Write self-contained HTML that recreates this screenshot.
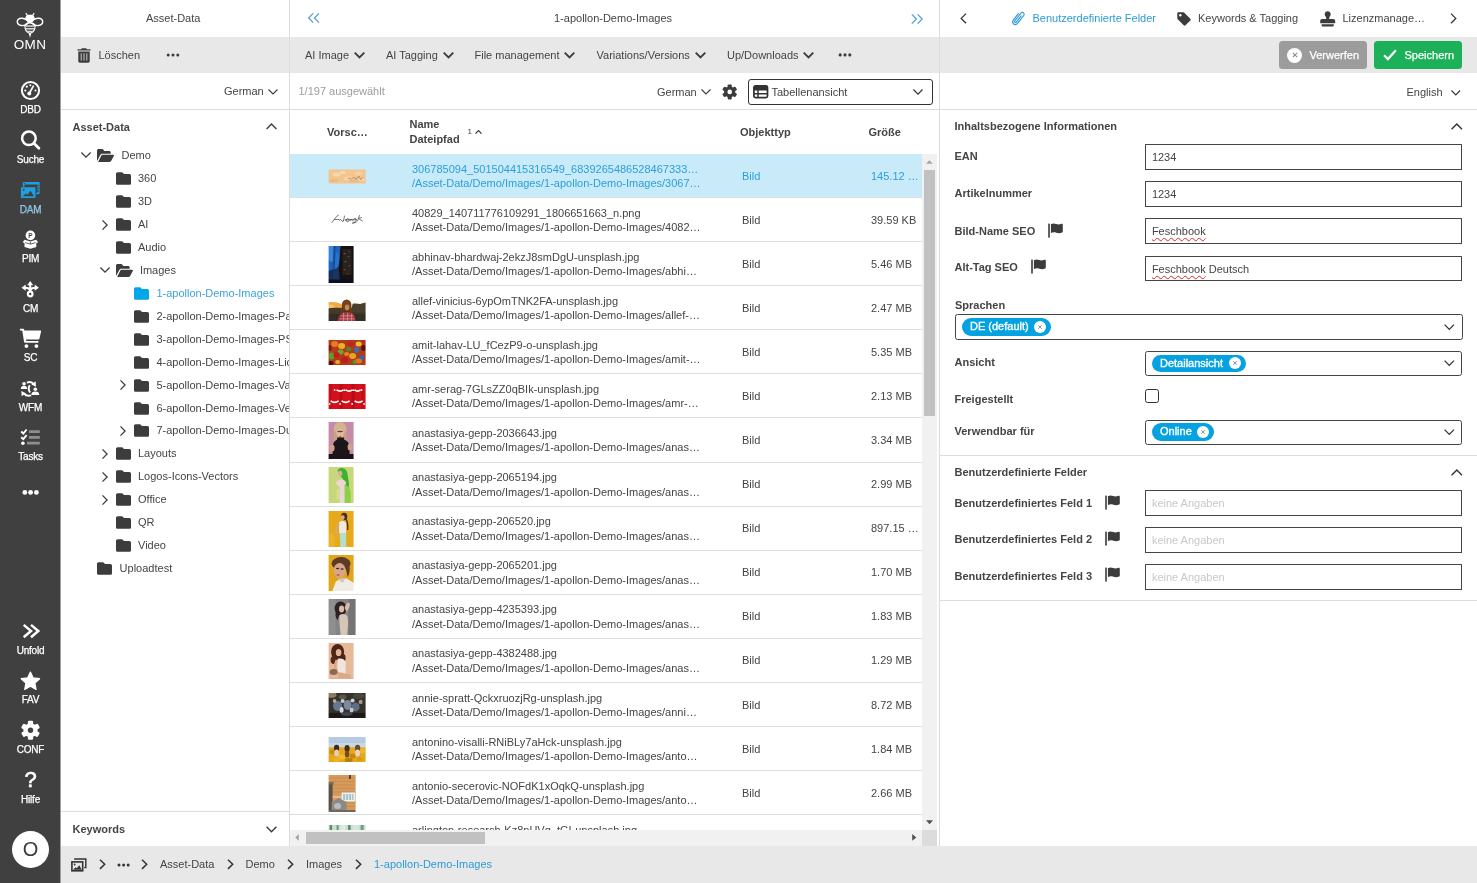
<!DOCTYPE html>
<html lang="de">
<head>
<meta charset="utf-8">
<title>OMN DAM</title>
<style>
*{box-sizing:border-box;margin:0;padding:0}
html,body{width:1477px;height:883px;overflow:hidden;background:#fff}
body{font-family:"Liberation Sans",Arial,sans-serif;font-size:11px;color:#444;position:relative}
#tree,#mid,#right,#side,#bc{will-change:transform;opacity:0.999}
.abs{position:absolute}
.t{position:absolute;white-space:nowrap;line-height:14px}
.b{font-weight:bold}
.blue{color:#2b9cd8}
.blue2{color:#3aa2dc}
svg{position:absolute;overflow:visible}
/* sidebar */
#side{position:absolute;left:0;top:0;width:61px;height:883px;background:linear-gradient(90deg,#404040 0,#404040 60px,#a0a0a0 60px,#a0a0a0 61px);color:#fff}
#side .lbl{position:absolute;left:0;width:61px;text-align:center;font-size:10px;line-height:13px;color:#fff;letter-spacing:-0.2px;-webkit-text-stroke:0.25px #fff}
/* panels */
.bar{position:absolute;background:#e8e8e8}
.hl{position:absolute;height:1px;background:#dcdcdc}
.vl{position:absolute;width:1px;background:#dcdcdc}
/* tree */
.tr{position:absolute;left:61px;width:229px;height:23px;overflow:hidden}
/* table */
.row{position:absolute;left:290px;width:632px;height:44.080px;border-bottom:1px solid #dedede;overflow:hidden}
.row.sel{background:#c9ebf9;color:#2b9fda}
.row .n1{position:absolute;left:122px;top:7.600px;white-space:nowrap;line-height:14px}
.row .n2{position:absolute;left:122px;top:22px;white-space:nowrap;line-height:14px}
.row .ty{position:absolute;left:452px;top:14.600px;line-height:14px}
.row .sz{position:absolute;left:581px;top:14.600px;line-height:14px;white-space:nowrap}
.row .th{position:absolute}
/* form */
.inp{position:absolute;left:1144.700px;width:317.800px;height:25.700px;border:1.300px solid #444;background:#fff;border-radius:0.500px}
.inp.sel{border-radius:2.500px}
.inp span{position:absolute;left:6.200px;top:5.100px;line-height:14px;white-space:nowrap}
.ph{color:#c8c8c8}
.btx{color:#fff;-webkit-text-stroke:0.25px #fff}
u{text-decoration:none}
.chip{position:absolute;height:17.400px;border-radius:9px;background:#05a2e1;color:#fff;line-height:17px;padding-left:8px;white-space:nowrap;-webkit-text-stroke:0.350px #fff}
.chip i{position:absolute;right:4.700px;top:2.700px;width:12px;height:12px;border-radius:6px;background:#fff}
.sq{text-decoration:underline wavy #e02424;text-decoration-thickness:1.200px;text-underline-offset:2px}
</style>
</head>
<body>

<!-- ============ SIDEBAR ============ -->
<div id="side">
  <!-- bee logo -->
  <svg style="left:16px;top:12px" width="28" height="25" viewBox="0 0 28 25">
    <g fill="none" stroke="#fff" stroke-width="1.450">
      <path d="M12.800 10.800C10.500 5.600 1.300 4.300 1.300 9.600c0 5 7.800 5.200 11.500 1.200z"/>
      <path d="M15.200 10.800C17.500 5.600 26.700 4.300 26.700 9.600c0 5-7.800 5.200-11.500 1.200z"/>
    </g>
    <path fill="#fff" d="M10.200 0.700l1.400 2h4.800l1.400-2 0.900 0.500-1.300 2.300c1.200 1 1.500 2.600 1 4.200-1.600 0.900-3 2-4.400 3.500-1.400-1.500-2.800-2.600-4.400-3.500-0.500-1.600-0.200-3.200 1-4.200L9.300 1.200z"/>
    <path d="M9 14.500c0-2.200 2-3.700 5-3.700s5 1.500 5 3.700c0 3.300-1.800 5.700-4.200 6.500l-0.800 2.600-0.800-2.600C10.800 20.200 9 17.800 9 14.500z" fill="none" stroke="#fff" stroke-width="1.200"/>
    <g fill="#d9d9d9">
      <rect x="10" y="13.300" width="8" height="1.500"/>
      <rect x="10" y="16" width="8" height="1.500"/>
      <path d="M10.700 18.700h6.600l-1.200 1.600h-4.200z"/>
    </g>
  </svg>
  <div class="lbl" style="top:37px;font-size:13.500px;line-height:16px;letter-spacing:0.300px;left:-0.500px;-webkit-text-stroke:0">OMN</div>

  <!-- DBD gauge -->
  <svg style="left:20px;top:80px" width="21" height="21" viewBox="0 0 21 21">
    <circle cx="10.500" cy="10.500" r="8.600" fill="none" stroke="#fff" stroke-width="2"/>
    <circle cx="9.300" cy="13.500" r="2" fill="#fff"/>
    <path d="M9.300 13.500L13.300 6.200" stroke="#fff" stroke-width="1.700" stroke-linecap="round"/>
    <circle cx="5.300" cy="10.500" r="1.100" fill="#fff"/><circle cx="6.800" cy="6.700" r="1.100" fill="#fff"/><circle cx="10.300" cy="5.200" r="1" fill="#fff"/><circle cx="15.500" cy="10.500" r="1.100" fill="#fff"/>
  </svg>
  <div class="lbl" style="top:103px">DBD</div>

  <!-- Suche -->
  <svg style="left:20px;top:129px" width="21" height="21" viewBox="0 0 21 21">
    <circle cx="8.900" cy="9.300" r="6.800" fill="none" stroke="#fff" stroke-width="2.500"/>
    <path d="M13.900 14.300l5 5" stroke="#fff" stroke-width="2.800" stroke-linecap="round"/>
  </svg>
  <div class="lbl" style="top:153px">Suche</div>

  <!-- DAM -->
  <svg style="left:20px;top:181px" width="21" height="18" viewBox="0 0 21 18">
    <path fill="#1e9fe0" d="M3.600 1h15.200a0.800 0.800 0 0 1 0.800 0.800v10.700a0.800 0.800 0 0 1-0.800 0.800h-2.800v-1.600h1.500v-8.200h-13.100v2.300h-1.600v-4a0.800 0.800 0 0 1 0.800-0.800z"/>
    <g fill="#3f3f3f"><rect x="17.800" y="3.800" width="1" height="1.400"/><rect x="17.800" y="6.600" width="1" height="1.400"/><rect x="17.800" y="9.400" width="1" height="1.400"/><rect x="3.800" y="2" width="1.500" height="0.800"/></g>
    <rect x="0.900" y="6.300" width="14.600" height="10.700" rx="0.800" fill="#1e9fe0"/>
    <path fill="#3f3f3f" d="M2.800 15.300l3-2.700 1.600 1.100 3.200-4 3.300 5.600z"/>
    <circle cx="3.800" cy="8.800" r="0.900" fill="#3f3f3f"/>
  </svg>
  <div class="lbl" style="top:202.500px;color:#2198d8">DAM</div>

  <!-- PIM -->
  <svg style="left:22px;top:230px" width="17" height="19" viewBox="0 0 17 19">
    <circle cx="8.400" cy="5.400" r="4.800" fill="#fff"/>
    <text x="8.400" y="7.900" font-size="6.500" font-weight="bold" text-anchor="middle" fill="#3f3f3f" font-family="Liberation Sans, sans-serif">P</text>
    <path fill="#fff" d="M2.600 9.800L8.400 11.600 14.200 9.800 16.200 12.300 14.300 13v4.100L8.400 18.700 2.500 17.100V13L0.600 12.300z"/>
    <path d="M3.200 12.600l5.200 1.500 5.200-1.500M8.400 11.800v2.300" stroke="#3f3f3f" stroke-width="0.800" fill="none"/>
  </svg>
  <div class="lbl" style="top:252px">PIM</div>

  <!-- CM -->
  <svg style="left:21px;top:280px" width="19" height="19" viewBox="0 0 19 19">
    <circle cx="9.200" cy="14" r="2.300" fill="none" stroke="#fff" stroke-width="2.200"/>
    <path d="M9.200 11.500C9.200 8.800 7.400 7.700 4 7.700M9.200 11.500C9.200 8.800 11 7.700 14.400 7.700M9.200 11.500V4.500" stroke="#fff" stroke-width="2.100" fill="none"/>
    <path fill="#fff" d="M9.200 0.900l3 4.300h-6zM0.500 7.700l4.200-3.100v6.200zM17.900 7.700l-4.200-3.100v6.200z"/>
  </svg>
  <div class="lbl" style="top:301.500px">CM</div>

  <!-- SC cart -->
  <svg style="left:19px;top:328px" width="23" height="21" viewBox="0 0 23 21">
    <path fill="#fff" d="M0.900 0.800h3.300c0.500 0 0.800 0.300 0.900 0.700l0.200 1.100h16c0.600 0 0.900 0.500 0.800 1l-1.700 7.200c-0.100 0.400-0.400 0.700-0.900 0.700H7l0.300 1.600h12.100v1.700H6c-0.500 0-0.800-0.300-0.900-0.700L3.200 2.500H0.900z"/>
    <circle cx="7.400" cy="18.100" r="1.900" fill="#fff"/><circle cx="17.400" cy="18.100" r="1.900" fill="#fff"/>
  </svg>
  <div class="lbl" style="top:351px">SC</div>

  <!-- WFM -->
  <svg style="left:20px;top:381px" width="21" height="16" viewBox="0 0 21 16">
    <g fill="#fff">
      <circle cx="4" cy="2.800" r="1.800"/><path d="M0.800 8c0-2.200 1.300-3.200 3.200-3.200s3.200 1 3.200 3.200z"/>
      <circle cx="15.300" cy="8.200" r="1.800"/><path d="M11.300 14c0-2.400 1.600-3.500 4-3.500s4 1.100 4 3.500z"/>
      <path d="M15.600 0.300l0.400 5.400-4.600-2.300z"/><path d="M1.700 15.300l-0.400-5.400 4.600 2.300z"/>
    </g>
    <path d="M6.800 1.600c2.800-1 5.600-0.400 7 1.600M9.700 4.200c-1 1.600-1.200 4.800 0.400 7.400M11.200 14.400c-2.800 0.800-5.600 0.200-7-1.800" stroke="#fff" stroke-width="1.900" fill="none"/>
  </svg>
  <div class="lbl" style="top:401px">WFM</div>

  <!-- Tasks -->
  <svg style="left:20px;top:428px" width="21" height="18" viewBox="0 0 21 18">
    <g stroke="#8e8e8e" stroke-width="2.800"><path d="M9 3.700h10.800M9 9.300h10.800M7 15.200h12.800"/></g>
    <g stroke="#fff" stroke-width="1.900" fill="none"><path d="M1.200 3.500l2.100 2 3.300-4M1.200 9.200l2.100 2 3.300-4"/></g>
    <circle cx="2.900" cy="15.300" r="1.800" fill="#fff"/>
  </svg>
  <div class="lbl" style="top:450px">Tasks</div>

  <svg style="left:20px;top:488px" width="21" height="9" viewBox="0 0 21 9"><g fill="#fff"><circle cx="4.800" cy="4.400" r="2.400"/><circle cx="10.600" cy="4.400" r="2.400"/><circle cx="16.400" cy="4.400" r="2.400"/></g></svg>

  <!-- Unfold -->
  <svg style="left:22px;top:623px" width="18" height="16" viewBox="0 0 18 16">
    <path d="M1.700 1.900l7.300 6.100-7.300 6.300M9 1.900l7.300 6.100-7.300 6.300" stroke="#fff" stroke-width="2.500" fill="none"/>
  </svg>
  <div class="lbl" style="top:644px">Unfold</div>

  <!-- FAV -->
  <svg style="left:20px;top:671px" width="21" height="20" viewBox="0 0 21 20">
    <path fill="#fff" stroke="#fff" stroke-width="1.200" stroke-linejoin="round" d="M10.400 1l2.800 5.900 6.400 0.800-4.700 4.400 1.200 6.300-5.700-3.100-5.700 3.100 1.200-6.300L1.200 7.700l6.400-0.800z"/>
  </svg>
  <div class="lbl" style="top:693px">FAV</div>

  <!-- CONF gear -->
  <svg style="left:20px;top:720px" width="21" height="21" viewBox="0 0 21 21">
    <g transform="translate(10.500 10.300)">
      <g fill="#fff">
        <rect x="-2.600" y="-9.500" width="5.200" height="19" rx="1.200"/>
        <rect x="-2.600" y="-9.500" width="5.200" height="19" rx="1.200" transform="rotate(60)"/>
        <rect x="-2.600" y="-9.500" width="5.200" height="19" rx="1.200" transform="rotate(120)"/>
        <circle r="7"/>
      </g>
      <circle r="2.700" fill="#3f3f3f"/>
    </g>
  </svg>
  <div class="lbl" style="top:743px">CONF</div>

  <!-- Hilfe -->
  <div class="lbl" style="top:768px;font-size:22px;line-height:24px;letter-spacing:0;-webkit-text-stroke:0.600px #fff">?</div>
  <div class="lbl" style="top:793px">Hilfe</div>

  <div class="abs" style="left:12px;top:831px;width:37px;height:37px;border-radius:50%;background:#fff;color:#3c3c3c;font-size:20px;line-height:37px;text-align:center">O</div>
</div>

<!-- ============ TREE PANEL ============ -->
<div id="tree">
  <div class="t" style="left:146px;top:11px">Asset-Data</div>
  <div class="bar" style="left:60.500px;top:37px;width:229.500px;height:36px"></div>
  <!-- trash -->
  <svg style="left:77px;top:48px" width="14" height="15" viewBox="0 0 14 15">
    <path fill="#3c3c3c" d="M4.800 0.300h4.400l0.600 1h3.300c0.300 0 0.500 0.200 0.500 0.500v0.700h-13.200v-0.700c0-0.300 0.200-0.500 0.500-0.500h3.300zM1.300 3.500h11.400v9.800c0 0.800-0.600 1.400-1.400 1.400h-8.600c-0.800 0-1.400-0.600-1.400-1.400z"/>
    <g fill="#a9a9a9"><rect x="3.600" y="5.300" width="1.300" height="7.300"/><rect x="6.350" y="5.300" width="1.300" height="7.300"/><rect x="9.100" y="5.300" width="1.300" height="7.300"/></g>
  </svg>
  <div class="t" style="left:98.500px;top:48px">Löschen</div>
  <svg style="left:166px;top:53px" width="14" height="4" viewBox="0 0 14 4"><g fill="#3c3c3c"><circle cx="2.200" cy="2" r="1.500"/><circle cx="7" cy="2" r="1.500"/><circle cx="11.800" cy="2" r="1.500"/></g></svg>
  <div class="t" style="left:224px;top:84px">German</div>
  <svg style="left:267.500px;top:89px" width="10" height="6" viewBox="0 0 10 6"><path d="M0.500 0.500l4.500 4.500 4.500-4.500" fill="none" stroke="#3c3c3c" stroke-width="1.100"/></svg>
  <div class="hl" style="left:61px;top:109px;width:229px"></div>
  <div class="vl" style="left:289px;top:0;height:846px"></div>
  <div class="t b" style="left:72.500px;top:119.500px">Asset-Data</div>
  <svg style="left:266px;top:123px" width="11" height="7" viewBox="0 0 11 7"><path d="M0.600 6l4.900-4.900 4.900 4.900" fill="none" stroke="#3c3c3c" stroke-width="1.400"/></svg>
<div id="treeclip" class="abs" style="left:0;top:110px;width:289px;height:700px;overflow:hidden"><div class="abs" style="left:0;top:-110px">
<svg style="left:97.3px;top:149.0px" width="17" height="13" viewBox="0 0 17 12.8"><path fill="#3c3c3c" d="M1.500 0h3.700c0.500 0 0.900 0.200 1.200 0.600l0.800 1.200h5c0.800 0 1.500 0.700 1.500 1.500v1.300h-8.300c-0.900 0-1.700 0.500-2.100 1.300l-3.300 6v-10.400c0-0.800 0.700-1.500 1.500-1.500zM5.400 5.700h10.600c0.700 0 1.100 0.700 0.800 1.300l-2.700 5c-0.300 0.500-0.800 0.800-1.400 0.800h-11.600l3-5.900c0.300-0.700 0.700-1.200 1.300-1.200z"/></svg>
<svg style="left:81.3px;top:152.4px" width="10" height="6" viewBox="0 0 10 6"><path d="M0.400 0.500l4.600 4.600 4.600-4.600" fill="none" stroke="#3c3c3c" stroke-width="1.300"/></svg>
<div class="t" style="left:121.5px;top:148.4px">Demo</div>
<svg style="left:115.7px;top:172.3px" width="15" height="13" viewBox="0 0 14.5 12.3"><path fill="#3c3c3c" d="M1.6 0h3.9c0.500 0 0.900 0.200 1.200 0.600l0.900 1.300h5.300c0.900 0 1.600 0.700 1.600 1.600v7.200c0 0.900-0.700 1.600-1.600 1.600h-11.300c-0.900 0-1.600-0.700-1.600-1.600v-9.100c0-0.900 0.700-1.600 1.600-1.600z"/></svg>
<div class="t" style="left:138.0px;top:171.3px">360</div>
<svg style="left:115.7px;top:195.2px" width="15" height="13" viewBox="0 0 14.5 12.3"><path fill="#3c3c3c" d="M1.6 0h3.9c0.500 0 0.900 0.200 1.200 0.600l0.900 1.300h5.300c0.900 0 1.600 0.700 1.600 1.600v7.200c0 0.900-0.700 1.600-1.600 1.600h-11.300c-0.900 0-1.600-0.700-1.600-1.600v-9.100c0-0.900 0.700-1.600 1.600-1.600z"/></svg>
<div class="t" style="left:138.0px;top:194.2px">3D</div>
<svg style="left:115.7px;top:218.2px" width="15" height="13" viewBox="0 0 14.5 12.3"><path fill="#3c3c3c" d="M1.6 0h3.9c0.500 0 0.900 0.200 1.200 0.600l0.900 1.300h5.300c0.900 0 1.600 0.700 1.600 1.600v7.200c0 0.900-0.700 1.600-1.600 1.600h-11.300c-0.900 0-1.600-0.700-1.600-1.600v-9.100c0-0.900 0.700-1.600 1.600-1.600z"/></svg>
<svg style="left:101.9px;top:219.7px" width="6" height="10" viewBox="0 0 6 10"><path d="M0.500 0.400l4.600 4.600-4.600 4.600" fill="none" stroke="#3c3c3c" stroke-width="1.300"/></svg>
<div class="t" style="left:138.0px;top:217.2px">AI</div>
<svg style="left:115.7px;top:241.1px" width="15" height="13" viewBox="0 0 14.5 12.3"><path fill="#3c3c3c" d="M1.6 0h3.9c0.500 0 0.900 0.200 1.200 0.600l0.900 1.300h5.300c0.900 0 1.600 0.700 1.600 1.600v7.200c0 0.900-0.700 1.600-1.600 1.600h-11.300c-0.900 0-1.600-0.700-1.600-1.600v-9.100c0-0.900 0.700-1.600 1.600-1.600z"/></svg>
<div class="t" style="left:138.0px;top:240.1px">Audio</div>
<svg style="left:115.7px;top:263.6px" width="17" height="13" viewBox="0 0 17 12.8"><path fill="#3c3c3c" d="M1.500 0h3.700c0.500 0 0.900 0.200 1.200 0.600l0.800 1.200h5c0.800 0 1.500 0.700 1.500 1.500v1.300h-8.300c-0.900 0-1.700 0.500-2.100 1.300l-3.300 6v-10.400c0-0.800 0.700-1.500 1.500-1.500zM5.400 5.700h10.600c0.700 0 1.100 0.700 0.800 1.300l-2.700 5c-0.300 0.500-0.800 0.800-1.400 0.800h-11.600l3-5.900c0.300-0.700 0.700-1.200 1.300-1.200z"/></svg>
<svg style="left:99.7px;top:267.0px" width="10" height="6" viewBox="0 0 10 6"><path d="M0.400 0.500l4.600 4.600 4.600-4.600" fill="none" stroke="#3c3c3c" stroke-width="1.300"/></svg>
<div class="t" style="left:139.9px;top:263.0px">Images</div>
<svg style="left:134.1px;top:286.9px" width="15" height="13" viewBox="0 0 14.5 12.3"><path fill="#00a7e6" d="M1.6 0h3.9c0.500 0 0.900 0.200 1.200 0.600l0.900 1.300h5.300c0.900 0 1.600 0.700 1.600 1.600v7.200c0 0.900-0.700 1.600-1.600 1.600h-11.300c-0.900 0-1.600-0.700-1.600-1.600v-9.100c0-0.900 0.700-1.600 1.600-1.600z"/></svg>
<div class="t blue2" style="left:156.4px;top:285.9px">1-apollon-Demo-Images</div>
<svg style="left:134.1px;top:309.8px" width="15" height="13" viewBox="0 0 14.5 12.3"><path fill="#3c3c3c" d="M1.6 0h3.9c0.500 0 0.900 0.200 1.200 0.600l0.900 1.300h5.300c0.900 0 1.600 0.700 1.600 1.600v7.200c0 0.900-0.700 1.600-1.600 1.600h-11.300c-0.900 0-1.600-0.700-1.600-1.600v-9.100c0-0.900 0.700-1.600 1.600-1.600z"/></svg>
<div class="t" style="left:156.4px;top:308.8px">2-apollon-Demo-Images-Packshots</div>
<svg style="left:134.1px;top:332.8px" width="15" height="13" viewBox="0 0 14.5 12.3"><path fill="#3c3c3c" d="M1.6 0h3.9c0.500 0 0.900 0.200 1.200 0.600l0.900 1.300h5.300c0.900 0 1.600 0.700 1.600 1.600v7.200c0 0.900-0.700 1.600-1.600 1.600h-11.300c-0.900 0-1.600-0.700-1.600-1.600v-9.100c0-0.900 0.700-1.600 1.600-1.600z"/></svg>
<div class="t" style="left:156.4px;top:331.8px">3-apollon-Demo-Images-PSD</div>
<svg style="left:134.1px;top:355.7px" width="15" height="13" viewBox="0 0 14.5 12.3"><path fill="#3c3c3c" d="M1.6 0h3.9c0.500 0 0.900 0.200 1.200 0.600l0.900 1.300h5.300c0.900 0 1.600 0.700 1.600 1.600v7.200c0 0.900-0.700 1.600-1.600 1.600h-11.300c-0.900 0-1.600-0.700-1.600-1.600v-9.100c0-0.900 0.700-1.600 1.600-1.600z"/></svg>
<div class="t" style="left:156.4px;top:354.7px">4-apollon-Demo-Images-Lichtbilder</div>
<svg style="left:134.1px;top:378.6px" width="15" height="13" viewBox="0 0 14.5 12.3"><path fill="#3c3c3c" d="M1.6 0h3.9c0.500 0 0.900 0.200 1.200 0.600l0.900 1.300h5.300c0.900 0 1.600 0.700 1.600 1.600v7.200c0 0.900-0.700 1.600-1.600 1.600h-11.300c-0.900 0-1.600-0.700-1.600-1.600v-9.100c0-0.900 0.700-1.600 1.600-1.600z"/></svg>
<svg style="left:120.3px;top:380.1px" width="6" height="10" viewBox="0 0 6 10"><path d="M0.500 0.400l4.600 4.600-4.600 4.600" fill="none" stroke="#3c3c3c" stroke-width="1.300"/></svg>
<div class="t" style="left:156.4px;top:377.6px">5-apollon-Demo-Images-Variationen</div>
<svg style="left:134.1px;top:401.5px" width="15" height="13" viewBox="0 0 14.5 12.3"><path fill="#3c3c3c" d="M1.6 0h3.9c0.500 0 0.900 0.200 1.200 0.600l0.900 1.300h5.300c0.900 0 1.600 0.700 1.600 1.600v7.200c0 0.900-0.700 1.600-1.600 1.600h-11.300c-0.900 0-1.600-0.700-1.600-1.600v-9.100c0-0.900 0.700-1.600 1.600-1.600z"/></svg>
<div class="t" style="left:156.4px;top:400.5px">6-apollon-Demo-Images-Vektoren</div>
<svg style="left:134.1px;top:424.4px" width="15" height="13" viewBox="0 0 14.5 12.3"><path fill="#3c3c3c" d="M1.6 0h3.9c0.500 0 0.900 0.200 1.200 0.600l0.900 1.300h5.300c0.900 0 1.600 0.700 1.600 1.600v7.200c0 0.900-0.700 1.600-1.600 1.600h-11.300c-0.900 0-1.600-0.700-1.600-1.600v-9.100c0-0.900 0.700-1.600 1.600-1.600z"/></svg>
<svg style="left:120.3px;top:425.9px" width="6" height="10" viewBox="0 0 6 10"><path d="M0.500 0.400l4.600 4.600-4.600 4.600" fill="none" stroke="#3c3c3c" stroke-width="1.300"/></svg>
<div class="t" style="left:156.4px;top:423.4px">7-apollon-Demo-Images-Duplikate</div>
<svg style="left:115.7px;top:447.4px" width="15" height="13" viewBox="0 0 14.5 12.3"><path fill="#3c3c3c" d="M1.6 0h3.9c0.500 0 0.900 0.200 1.200 0.600l0.900 1.300h5.300c0.900 0 1.600 0.700 1.600 1.600v7.200c0 0.900-0.700 1.600-1.600 1.600h-11.300c-0.900 0-1.600-0.700-1.600-1.600v-9.100c0-0.900 0.700-1.600 1.600-1.600z"/></svg>
<svg style="left:101.9px;top:448.9px" width="6" height="10" viewBox="0 0 6 10"><path d="M0.500 0.400l4.600 4.600-4.600 4.600" fill="none" stroke="#3c3c3c" stroke-width="1.300"/></svg>
<div class="t" style="left:138.0px;top:446.4px">Layouts</div>
<svg style="left:115.7px;top:470.3px" width="15" height="13" viewBox="0 0 14.5 12.3"><path fill="#3c3c3c" d="M1.6 0h3.9c0.500 0 0.900 0.200 1.200 0.600l0.900 1.300h5.300c0.900 0 1.600 0.700 1.600 1.600v7.200c0 0.900-0.700 1.600-1.600 1.600h-11.300c-0.900 0-1.600-0.700-1.600-1.600v-9.100c0-0.900 0.700-1.600 1.600-1.600z"/></svg>
<svg style="left:101.9px;top:471.8px" width="6" height="10" viewBox="0 0 6 10"><path d="M0.500 0.400l4.600 4.600-4.600 4.600" fill="none" stroke="#3c3c3c" stroke-width="1.300"/></svg>
<div class="t" style="left:138.0px;top:469.3px">Logos-Icons-Vectors</div>
<svg style="left:115.7px;top:493.2px" width="15" height="13" viewBox="0 0 14.5 12.3"><path fill="#3c3c3c" d="M1.6 0h3.9c0.500 0 0.900 0.200 1.200 0.600l0.900 1.300h5.300c0.900 0 1.600 0.700 1.600 1.600v7.200c0 0.900-0.700 1.600-1.600 1.600h-11.300c-0.900 0-1.600-0.700-1.600-1.600v-9.100c0-0.900 0.700-1.600 1.600-1.600z"/></svg>
<svg style="left:101.9px;top:494.7px" width="6" height="10" viewBox="0 0 6 10"><path d="M0.500 0.400l4.600 4.600-4.600 4.600" fill="none" stroke="#3c3c3c" stroke-width="1.300"/></svg>
<div class="t" style="left:138.0px;top:492.2px">Office</div>
<svg style="left:115.7px;top:516.1px" width="15" height="13" viewBox="0 0 14.5 12.3"><path fill="#3c3c3c" d="M1.6 0h3.9c0.500 0 0.900 0.200 1.200 0.600l0.900 1.300h5.300c0.900 0 1.600 0.700 1.600 1.600v7.200c0 0.900-0.700 1.600-1.600 1.600h-11.300c-0.900 0-1.600-0.700-1.600-1.600v-9.100c0-0.900 0.700-1.600 1.600-1.600z"/></svg>
<div class="t" style="left:138.0px;top:515.1px">QR</div>
<svg style="left:115.7px;top:539.0px" width="15" height="13" viewBox="0 0 14.5 12.3"><path fill="#3c3c3c" d="M1.6 0h3.9c0.500 0 0.900 0.200 1.200 0.600l0.900 1.300h5.300c0.900 0 1.600 0.700 1.600 1.600v7.200c0 0.900-0.700 1.600-1.600 1.600h-11.300c-0.900 0-1.600-0.700-1.600-1.600v-9.100c0-0.900 0.700-1.600 1.600-1.600z"/></svg>
<div class="t" style="left:138.0px;top:538.0px">Video</div>
<svg style="left:97.3px;top:562.0px" width="15" height="13" viewBox="0 0 14.5 12.3"><path fill="#3c3c3c" d="M1.6 0h3.9c0.500 0 0.900 0.200 1.200 0.600l0.900 1.300h5.300c0.900 0 1.600 0.700 1.600 1.600v7.200c0 0.900-0.700 1.600-1.600 1.600h-11.300c-0.900 0-1.600-0.700-1.600-1.600v-9.100c0-0.900 0.700-1.600 1.600-1.600z"/></svg>
<div class="t" style="left:119.6px;top:561.0px">Uploadtest</div>
</div></div>
  <div class="hl" style="left:61px;top:811px;width:229px"></div>
  <div class="t b" style="left:72.500px;top:821.500px">Keywords</div>
  <svg style="left:266px;top:826px" width="11" height="7" viewBox="0 0 11 7"><path d="M0.600 0.800l4.900 4.900 4.900-4.900" fill="none" stroke="#3c3c3c" stroke-width="1.400"/></svg>
</div>

<!-- ============ MIDDLE PANEL ============ -->
<div id="mid">
  <svg style="left:307.500px;top:13px" width="12" height="10" viewBox="0 0 12 10"><path d="M5.200 0.400l-4.600 4.600 4.600 4.600M11 0.400l-4.600 4.600 4.600 4.600" fill="none" stroke="#4a9fd6" stroke-width="1.200"/></svg>
  <div class="t" style="left:554px;top:11px">1-apollon-Demo-Images</div>
  <svg style="left:911px;top:13.500px" width="12" height="10" viewBox="0 0 12 10"><path d="M0.800 0.400l4.600 4.600-4.600 4.600M6.600 0.400l4.600 4.600-4.600 4.600" fill="none" stroke="#4a9fd6" stroke-width="1.200"/></svg>
  <div class="bar" style="left:290px;top:37px;width:650px;height:36px"></div>
  <div class="t" style="left:305px;top:48px">AI Image</div><svg style="left:354px;top:52px" width="11" height="7" viewBox="0 0 11 7"><path d="M0.700 0.700l4.800 4.800 4.800-4.800" fill="none" stroke="#3c3c3c" stroke-width="1.900"/></svg>
  <div class="t" style="left:386px;top:48px">AI Tagging</div><svg style="left:442.5px;top:52px" width="11" height="7" viewBox="0 0 11 7"><path d="M0.700 0.700l4.800 4.800 4.800-4.800" fill="none" stroke="#3c3c3c" stroke-width="1.900"/></svg>
  <div class="t" style="left:474.500px;top:48px">File management</div><svg style="left:564px;top:52px" width="11" height="7" viewBox="0 0 11 7"><path d="M0.700 0.700l4.800 4.800 4.800-4.800" fill="none" stroke="#3c3c3c" stroke-width="1.900"/></svg>
  <div class="t" style="left:596.500px;top:48px">Variations/Versions</div><svg style="left:694.5px;top:52px" width="11" height="7" viewBox="0 0 11 7"><path d="M0.700 0.700l4.800 4.800 4.800-4.800" fill="none" stroke="#3c3c3c" stroke-width="1.900"/></svg>
  <div class="t" style="left:727px;top:48px">Up/Downloads</div><svg style="left:803px;top:52px" width="11" height="7" viewBox="0 0 11 7"><path d="M0.700 0.700l4.800 4.800 4.800-4.800" fill="none" stroke="#3c3c3c" stroke-width="1.900"/></svg>
  <svg style="left:838px;top:53px" width="14" height="4" viewBox="0 0 14 4"><g fill="#3c3c3c"><circle cx="2.200" cy="1.900" r="1.550"/><circle cx="7" cy="1.900" r="1.550"/><circle cx="11.800" cy="1.900" r="1.550"/></g></svg>
  <div class="t" style="left:298.500px;top:84px;color:#9c9c9c">1/197 ausgewählt</div>
  <div class="t" style="left:657px;top:84.500px">German</div>
  <svg style="left:700.500px;top:89px" width="10" height="6" viewBox="0 0 10 6"><path d="M0.500 0.500l4.500 4.500 4.500-4.500" fill="none" stroke="#3c3c3c" stroke-width="1.100"/></svg>
  <!-- gear -->
  <svg style="left:722px;top:84px" width="16" height="16" viewBox="0 0 16 16">
    <g transform="translate(7.700 7.900)">
      <g fill="#3c3c3c">
        <rect x="-2" y="-7.500" width="4" height="15" rx="0.900"/>
        <rect x="-2" y="-7.500" width="4" height="15" rx="0.900" transform="rotate(60)"/>
        <rect x="-2" y="-7.500" width="4" height="15" rx="0.900" transform="rotate(120)"/>
        <circle r="5.600"/>
      </g>
      <circle r="2.300" fill="#fff"/>
    </g>
  </svg>
  <div class="abs" style="left:748px;top:79px;width:184.500px;height:26px;border:1.300px solid #333;border-radius:3px"></div>
  <!-- table icon -->
  <svg style="left:752.500px;top:85px" width="16" height="14" viewBox="0 0 16 14">
    <rect x="0.900" y="0.900" width="13.600" height="11.800" rx="1.600" fill="none" stroke="#333" stroke-width="1.700"/>
    <path d="M1 4.700h13.500M1 8.700h13.500M5 4.700v8" stroke="#333" stroke-width="1.500" fill="none"/>
    <rect x="1" y="1" width="13.400" height="3.600" fill="#333"/>
  </svg>
  <div class="t" style="left:771.500px;top:84.500px">Tabellenansicht</div>
  <svg style="left:913px;top:89px" width="10" height="6" viewBox="0 0 10 6"><path d="M0.500 0.500l4.500 4.600 4.500-4.600" fill="none" stroke="#333" stroke-width="1.200"/></svg>
  <div class="hl" style="left:290px;top:109px;width:650px"></div>
  <div class="t b" style="left:327px;top:125px">Vorsc…</div>
  <div class="t b" style="left:409.500px;top:117px">Name</div>
  <div class="t b" style="left:409.500px;top:132px">Dateipfad</div>
  <div class="t" style="left:467.500px;top:125px;font-size:8px">1</div>
  <svg style="left:474.500px;top:129.500px" width="7" height="4" viewBox="0 0 7 4"><path d="M0.500 3.600l3-3 3 3" fill="none" stroke="#333" stroke-width="1.200"/></svg>
  <div class="t b" style="left:740px;top:125px">Objekttyp</div>
  <div class="t b" style="left:868.500px;top:125px">Größe</div>
  <div id="rows" class="abs" style="left:0;top:154px;width:939px;height:676px;overflow:hidden"><div class="abs" style="left:0;top:-154px">
<div class="row sel" style="top:154.00px"><span class="th" style="left:0;top:0;transform:translate(38.6px,15.39px);width:37px;height:13.8px;overflow:hidden"><svg style="left:-2px;top:-2px;filter:blur(0.450px)" width="41" height="17.8" viewBox="-2 -2 41 17.8"><rect x="-2" y="-2" width="41" height="17.8" fill="#f2c48e"/><ellipse cx="8" cy="5" rx="4" ry="2" fill="#f8d6aa"/><ellipse cx="20" cy="9" rx="5" ry="2" fill="#f7d2a4"/><ellipse cx="14" cy="3" rx="3" ry="1.5" fill="#f9dab2"/><ellipse cx="30" cy="4" rx="4" ry="2" fill="#f6d0a2"/><ellipse cx="5" cy="11" rx="4" ry="1.5" fill="#ebb87e"/><ellipse cx="25" cy="11.5" rx="5" ry="1.5" fill="#ecba82"/><ellipse cx="33" cy="10" rx="3" ry="1.5" fill="#f8d6aa"/><path d="M19.500 9.600q1.200-1.800 2.200-0.400t2.400-0.500 2.400 0.300 2.400-0.900 2.400 0.600 2.400-0.700" fill="none" stroke="#8a6844" stroke-width="0.600"/></svg></span><span class="n1">306785094_501504415316549_6839265486528467333…</span><span class="n2">/Asset-Data/Demo/Images/1-apollon-Demo-Images/3067…</span><span class="ty">Bild</span><span class="sz">145.12 …</span></div>
<div class="row" style="top:198.08px"><svg style="left:40.500px;top:15px;filter:blur(0.350px)" width="33" height="12" viewBox="0 0 33 12"><path d="M1 9.500C3.500 6 5 3.500 7.500 2M3.500 6.500H8M8.500 7.500q1-2.500 2 0t2-0.300M13.500 3l-1 5M15 7.500c0.500-2.500 3-2.500 3-0.300s-2.500 2.300-3 0.300M19 7.500q1-2.500 2.200-0.300M22 7c0.800-2.300 3.200-2.300 3.200-0.200s-2 3.700-3.600 3.700M26.500 8l2-5.500M27.500 5.500l3-1M28 5.800l3.500 2.200" fill="none" stroke="#4a4a4a" stroke-width="0.750" stroke-linecap="round"/><path d="M14 6.800H26M21.500 9.300h4" fill="none" stroke="#3c3c3c" stroke-width="1.100" opacity="0.750"/></svg><span class="n1">40829_140711776109291_1806651663_n.png</span><span class="n2">/Asset-Data/Demo/Images/1-apollon-Demo-Images/4082…</span><span class="ty">Bild</span><span class="sz">39.59 KB</span></div>
<div class="row" style="top:242.16px"><span class="th" style="left:0;top:0;transform:translate(38.6px,3.99px);width:24.8px;height:36.6px;overflow:hidden"><svg style="left:-2px;top:-2px;filter:blur(0.450px)" width="28.8" height="40.6" viewBox="-2 -2 28.8 40.6"><rect x="-2" y="-2" width="28.8" height="40.6" fill="#121318"/><path d="M-2-2H12.500L11 16 9 24 4 28-2 31Z" fill="#1f63b8"/><ellipse cx="3" cy="7" rx="4.5" ry="9" fill="#3a86dc"/><ellipse cx="8" cy="14" rx="2.5" ry="8" fill="#2a72c8"/><path d="M5-2H7.500L6 22H4Z" fill="#184c94"/><path d="M-2 26L5 23 9 24 10 38H-2Z" fill="#142e5c"/><path d="M12-2H27V38H9.500Z" fill="#161214"/><rect x="14" y="3" width="9" height="26" fill="#2a201c"/><rect x="15" y="7" width="1.8" height="1.3" fill="#6a5848"/><rect x="19" y="10" width="1.8" height="1.3" fill="#5c4c40"/><rect x="16" y="15" width="1.8" height="1.3" fill="#6c5a4a"/><rect x="20" y="19" width="1.8" height="1.3" fill="#54463c"/><rect x="15" y="23" width="1.8" height="1.3" fill="#5e4e42"/><rect x="20" y="5" width="1.4" height="1.3" fill="#50443c"/><rect x="18" y="27" width="1.8" height="1.3" fill="#4c4038"/><path d="M5 24L10 21 11.500 38H4Z" fill="#1c3460"/><rect x="-2" y="33.5" width="29" height="5" fill="#0c1020"/></svg></span><span class="n1">abhinav-bhardwaj-2ekzJ8smDgU-unsplash.jpg</span><span class="n2">/Asset-Data/Demo/Images/1-apollon-Demo-Images/abhi…</span><span class="ty">Bild</span><span class="sz">5.46 MB</span></div>
<div class="row" style="top:286.24px"><span class="th" style="left:0;top:0;transform:translate(38.6px,9.89px);width:37px;height:24.8px;overflow:hidden"><svg style="left:-2px;top:-2px;filter:blur(0.450px)" width="41" height="28.8" viewBox="-2 -2 41 28.8"><rect x="-2" y="-2" width="41" height="28.8" fill="#ffffff"/><rect x="-2" y="7" width="41" height="20" fill="#fbeedc"/><ellipse cx="3" cy="11" rx="11" ry="5" fill="#f0a848"/><ellipse cx="1" cy="12" rx="6" ry="3.5" fill="#f8c468"/><path d="M-2 13C6 11 12 12 16 13H39V27H-2Z" fill="#463a26"/><path d="M24 8C28 7 31 9 33 7.500L39 6V16H22Z" fill="#4a4030"/><rect x="-2" y="18" width="41" height="9" fill="#332e26"/><ellipse cx="18" cy="9" rx="4.8" ry="5.5" fill="#74421c"/><ellipse cx="18.5" cy="11.5" rx="2.2" ry="2.8" fill="#c48a5c"/><path d="M13.500 10C12 14 12.500 17 14 19L16 13ZM22.500 10C24 14 23.500 17 22 19L20.500 13Z" fill="#6a3a18"/><path d="M9 27C9 19 13 16 18.500 16S27 19 27 27Z" fill="#a8343e"/><path d="M12 20h13M11 23h15M15 17v10M19 17v10M23 18v9" fill="none" stroke="#e0a0a0" stroke-width="0.700"/></svg></span><span class="n1">allef-vinicius-6ypOmTNK2FA-unsplash.jpg</span><span class="n2">/Asset-Data/Demo/Images/1-apollon-Demo-Images/allef-…</span><span class="ty">Bild</span><span class="sz">2.47 MB</span></div>
<div class="row" style="top:330.32px"><span class="th" style="left:0;top:0;transform:translate(38.6px,9.89px);width:37px;height:24.8px;overflow:hidden"><svg style="left:-2px;top:-2px;filter:blur(0.450px)" width="41" height="28.8" viewBox="-2 -2 41 28.8"><rect x="-2" y="-2" width="41" height="28.8" fill="#b23a1c"/><ellipse cx="13" cy="6" rx="3.5" ry="3" fill="#e8b322"/><ellipse cx="24" cy="16" rx="3.5" ry="3" fill="#e4a81e"/><ellipse cx="30" cy="4" rx="3" ry="2.5" fill="#ecc02c"/><ellipse cx="3" cy="16" rx="3" ry="3.5" fill="#5c9c2c"/><ellipse cx="12" cy="12" rx="3" ry="2.5" fill="#6aa82e"/><ellipse cx="20" cy="9" rx="2.5" ry="2.5" fill="#4c8c28"/><ellipse cx="8" cy="15" rx="3" ry="3" fill="#c61c1c"/><ellipse cx="22" cy="4" rx="3.5" ry="2.5" fill="#c82020"/><ellipse cx="16" cy="20" rx="3.5" ry="3" fill="#c01a1a"/><ellipse cx="28" cy="10" rx="2.5" ry="3" fill="#3272ba"/><ellipse cx="33" cy="18" rx="2.5" ry="2.5" fill="#2c68ae"/><ellipse cx="6" cy="4" rx="3.5" ry="3" fill="#e87a22"/><ellipse cx="18" cy="14" rx="2.5" ry="2" fill="#ea8224"/><ellipse cx="30" cy="21" rx="3.5" ry="2.5" fill="#e67420"/><ellipse cx="35" cy="8" rx="2.5" ry="3" fill="#5a1210"/><ellipse cx="2" cy="23" rx="3" ry="2" fill="#4c1010"/><ellipse cx="9" cy="22" rx="2.5" ry="2" fill="#e4b020"/><ellipse cx="26" cy="22" rx="2" ry="2" fill="#58982a"/><ellipse cx="35" cy="1" rx="2" ry="2" fill="#d02020"/><ellipse cx="1" cy="8" rx="2" ry="3" fill="#7a1814"/></svg></span><span class="n1">amit-lahav-LU_fCezP9-o-unsplash.jpg</span><span class="n2">/Asset-Data/Demo/Images/1-apollon-Demo-Images/amit-…</span><span class="ty">Bild</span><span class="sz">5.35 MB</span></div>
<div class="row" style="top:374.40px"><span class="th" style="left:0;top:0;transform:translate(38.6px,9.89px);width:37px;height:24.8px;overflow:hidden"><svg style="left:-2px;top:-2px;filter:blur(0.450px)" width="41" height="28.8" viewBox="-2 -2 41 28.8"><rect x="-2" y="-2" width="41" height="28.8" fill="#d3101b"/><rect x="11" y="-2" width="3" height="29" fill="#b80c16"/><rect x="23" y="-2" width="3" height="29" fill="#b80c16"/><rect x="33" y="-2" width="2" height="29" fill="#c00e18"/><rect x="1" y="-2" width="2" height="29" fill="#c00e18"/><path d="M8 6q3.500 2.600 7 0M17 6q3.500 2.600 7 0M26 6q3 2.400 6 0M2 17q4 3 8 0M13 17q4 3 8 0M26 17q4 3 8 0" fill="none" stroke="#fff" stroke-width="1.700"/><ellipse cx="6" cy="6" rx="0.9" ry="0.9" fill="#fff"/><ellipse cx="16" cy="6.3" rx="0.9" ry="0.9" fill="#fff"/><ellipse cx="25" cy="6.3" rx="0.9" ry="0.9" fill="#fff"/><ellipse cx="33" cy="6" rx="0.9" ry="0.9" fill="#fff"/><ellipse cx="1" cy="20" rx="0.9" ry="0.9" fill="#fff"/><ellipse cx="11.5" cy="20" rx="0.9" ry="0.9" fill="#fff"/><ellipse cx="23.5" cy="20" rx="0.9" ry="0.9" fill="#fff"/><ellipse cx="35.5" cy="20" rx="0.9" ry="0.9" fill="#fff"/></svg></span><span class="n1">amr-serag-7GLsZZ0qBIk-unsplash.jpg</span><span class="n2">/Asset-Data/Demo/Images/1-apollon-Demo-Images/amr-…</span><span class="ty">Bild</span><span class="sz">2.13 MB</span></div>
<div class="row" style="top:418.48px"><span class="th" style="left:0;top:0;transform:translate(38.6px,3.99px);width:24.8px;height:36.6px;overflow:hidden"><svg style="left:-2px;top:-2px;filter:blur(0.450px)" width="28.8" height="40.6" viewBox="-2 -2 28.8 40.6"><rect x="-2" y="-2" width="28.8" height="40.6" fill="#c58ba8"/><ellipse cx="11.5" cy="8" rx="6.5" ry="8" fill="#d4b48e"/><ellipse cx="11.5" cy="11.5" rx="3.6" ry="4.8" fill="#e2b8a2"/><ellipse cx="11.5" cy="9.5" rx="3" ry="0.8" fill="#5a4038"/><ellipse cx="11.5" cy="15" rx="1.3" ry="0.7" fill="#b02830"/><path d="M6 8C4 14 5 20 7 24L9 14ZM17 8C19 14 18 20 16 24L14.500 14Z" fill="#c8a47c"/><path d="M4 38V26C4 19 8 17 12 17S21 19 21 26V38Z" fill="#1a161a"/><rect x="8.5" y="15.5" width="7" height="4" fill="#1c181c"/><ellipse cx="3.5" cy="26" rx="2.5" ry="3.5" fill="#d0a08c"/><ellipse cx="21.5" cy="25" rx="2.5" ry="3.5" fill="#d0a08c"/><rect x="-2" y="32" width="29" height="6" fill="#1c1418"/></svg></span><span class="n1">anastasiya-gepp-2036643.jpg</span><span class="n2">/Asset-Data/Demo/Images/1-apollon-Demo-Images/anas…</span><span class="ty">Bild</span><span class="sz">3.34 MB</span></div>
<div class="row" style="top:462.56px"><span class="th" style="left:0;top:0;transform:translate(38.6px,3.99px);width:24.8px;height:36.6px;overflow:hidden"><svg style="left:-2px;top:-2px;filter:blur(0.450px)" width="28.8" height="40.6" viewBox="-2 -2 28.8 40.6"><rect x="-2" y="-2" width="28.8" height="40.6" fill="#c7d77b"/><path d="M9 3C12-1 19 1 19 8 20 14 21 18 20 22L16 20C16 14 14 10 10 8Z" fill="#3cb42a"/><ellipse cx="11.5" cy="6.5" rx="2.2" ry="2.8" fill="#d8b0a0"/><ellipse cx="12.5" cy="16" rx="5" ry="3.5" fill="#efd4d8"/><rect x="11" y="19" width="5.5" height="19" fill="#e9d6da"/><path d="M16 18C20 18 22 22 22 28V38H16Z" fill="#8ed044"/><rect x="8" y="22" width="3" height="10" fill="#d6e08a"/></svg></span><span class="n1">anastasiya-gepp-2065194.jpg</span><span class="n2">/Asset-Data/Demo/Images/1-apollon-Demo-Images/anas…</span><span class="ty">Bild</span><span class="sz">2.99 MB</span></div>
<div class="row" style="top:506.64px"><span class="th" style="left:0;top:0;transform:translate(38.6px,3.99px);width:24.8px;height:36.6px;overflow:hidden"><svg style="left:-2px;top:-2px;filter:blur(0.450px)" width="28.8" height="40.6" viewBox="-2 -2 28.8 40.6"><rect x="-2" y="-2" width="28.8" height="40.6" fill="#e6aa1c"/><ellipse cx="15.5" cy="5.5" rx="3.2" ry="3.8" fill="#4c2c1c"/><ellipse cx="14" cy="6.5" rx="2" ry="2.6" fill="#d8a888"/><path d="M17 7C19 11 19.500 15 19 19" fill="none" stroke="#4c2c1c" stroke-width="1.400"/><path d="M10.500 11C13 9.500 16 10 17.500 12V22H10.500Z" fill="#eeeae2"/><path d="M11 22H17.500V38H12Z" fill="#b2e0d0"/><path d="M10.500 13C8 16 7 20 8 23" fill="none" stroke="#d8a888" stroke-width="1.800"/><ellipse cx="3" cy="30" rx="3" ry="8" fill="#eab42a"/></svg></span><span class="n1">anastasiya-gepp-206520.jpg</span><span class="n2">/Asset-Data/Demo/Images/1-apollon-Demo-Images/anas…</span><span class="ty">Bild</span><span class="sz">897.15 …</span></div>
<div class="row" style="top:550.72px"><span class="th" style="left:0;top:0;transform:translate(38.6px,3.99px);width:24.8px;height:36.6px;overflow:hidden"><svg style="left:-2px;top:-2px;filter:blur(0.450px)" width="28.8" height="40.6" viewBox="-2 -2 28.8 40.6"><rect x="-2" y="-2" width="28.8" height="40.6" fill="#e2a61a"/><ellipse cx="12.5" cy="8.5" rx="9.5" ry="6.5" fill="#5c3a26"/><path d="M20 9C22 13 21 19 19 22L17 12Z" fill="#5c3a26"/><ellipse cx="11" cy="15.5" rx="6" ry="7.5" fill="#d9a68a"/><ellipse cx="9" cy="13.5" rx="1.6" ry="0.7" fill="#3c2418"/><ellipse cx="13.5" cy="14" rx="1.6" ry="0.7" fill="#3c2418"/><ellipse cx="9.5" cy="20" rx="1.6" ry="0.8" fill="#c04040"/><path d="M3 38L7 27C10 24 16 23 19 24L27 29V38Z" fill="#efebe5"/><path d="M9 24L14 28 17 23Z" fill="#d4c8bc"/></svg></span><span class="n1">anastasiya-gepp-2065201.jpg</span><span class="n2">/Asset-Data/Demo/Images/1-apollon-Demo-Images/anas…</span><span class="ty">Bild</span><span class="sz">1.70 MB</span></div>
<div class="row" style="top:594.80px"><span class="th" style="left:0;top:0;transform:translate(38.6px,3.99px);width:27.3px;height:36.6px;overflow:hidden"><svg style="left:-2px;top:-2px;filter:blur(0.450px)" width="31.3" height="40.6" viewBox="-2 -2 31.3 40.6"><rect x="-2" y="-2" width="31.3" height="40.6" fill="#858587"/><rect x="-2" y="-2" width="9" height="41" fill="#8f8f91"/><rect x="20" y="-2" width="10" height="41" fill="#747476"/><ellipse cx="12" cy="9.5" rx="6" ry="7" fill="#2c2020"/><ellipse cx="13" cy="10" rx="2.6" ry="3.4" fill="#d9baa6"/><path d="M16 9C17 5 19 3 21 4 22 7 20 10 18 13Z" fill="#d8bca8"/><path d="M11 16C14 14 18 15 19 18 20 24 19 30 18.500 38H12C12 30 10 22 11 16Z" fill="#d6c6b6"/><path d="M8 11C6 15 7 19 9 21L11 15Z" fill="#2c2020"/></svg></span><span class="n1">anastasiya-gepp-4235393.jpg</span><span class="n2">/Asset-Data/Demo/Images/1-apollon-Demo-Images/anas…</span><span class="ty">Bild</span><span class="sz">1.83 MB</span></div>
<div class="row" style="top:638.88px"><span class="th" style="left:0;top:0;transform:translate(38.6px,3.99px);width:24.8px;height:36.6px;overflow:hidden"><svg style="left:-2px;top:-2px;filter:blur(0.450px)" width="28.8" height="40.6" viewBox="-2 -2 28.8 40.6"><rect x="-2" y="-2" width="28.8" height="40.6" fill="#e7b999"/><ellipse cx="9" cy="9" rx="6.5" ry="8" fill="#4c2418"/><ellipse cx="5" cy="17" rx="3" ry="4" fill="#54281a"/><ellipse cx="14.5" cy="15" rx="2.5" ry="4" fill="#4c2418"/><ellipse cx="10" cy="9.5" rx="2.8" ry="3.6" fill="#e2b292"/><path d="M9 16C12 15 16 16 17 19V30C15 33 11 33 9 30Z" fill="#f1e5e1"/><path d="M8 17C6 21 6 25 8 28" fill="none" stroke="#dca88c" stroke-width="2"/><path d="M9 29C13 30 18 30 22 32V36H10Z" fill="#dca88c"/><ellipse cx="5" cy="29" rx="4" ry="3" fill="#8a6a52"/><rect x="-2" y="35" width="29" height="3" fill="#e0ae90"/></svg></span><span class="n1">anastasiya-gepp-4382488.jpg</span><span class="n2">/Asset-Data/Demo/Images/1-apollon-Demo-Images/anas…</span><span class="ty">Bild</span><span class="sz">1.29 MB</span></div>
<div class="row" style="top:682.96px"><span class="th" style="left:0;top:0;transform:translate(38.6px,9.89px);width:37px;height:24.8px;overflow:hidden"><svg style="left:-2px;top:-2px;filter:blur(0.450px)" width="41" height="28.8" viewBox="-2 -2 41 28.8"><rect x="-2" y="-2" width="41" height="28.8" fill="#35312b"/><ellipse cx="3" cy="2" rx="5" ry="3" fill="#8c7c62"/><ellipse cx="14" cy="4" rx="4" ry="2.5" fill="#5c5648"/><ellipse cx="30" cy="3" rx="6" ry="3" fill="#4a463e"/><ellipse cx="9" cy="13" rx="4.5" ry="5" fill="#66788e"/><ellipse cx="19" cy="12" rx="4" ry="5" fill="#7a8aa0"/><ellipse cx="27" cy="14" rx="4" ry="4.5" fill="#5e6e84"/><ellipse cx="14" cy="8" rx="2" ry="2" fill="#c6cacf"/><ellipse cx="24" cy="7.5" rx="2" ry="2" fill="#d0d2d6"/><ellipse cx="6" cy="8" rx="1.8" ry="2" fill="#b8a898"/><ellipse cx="32" cy="9" rx="2" ry="2.2" fill="#a89888"/><ellipse cx="13" cy="17" rx="2" ry="3" fill="#d4d8dc"/><ellipse cx="23" cy="17" rx="2" ry="2.5" fill="#c4c8cc"/><rect x="-2" y="20" width="41" height="7" fill="#1c1a18"/><ellipse cx="18" cy="21" rx="6" ry="2" fill="#3c4654"/></svg></span><span class="n1">annie-spratt-QckxruozjRg-unsplash.jpg</span><span class="n2">/Asset-Data/Demo/Images/1-apollon-Demo-Images/anni…</span><span class="ty">Bild</span><span class="sz">8.72 MB</span></div>
<div class="row" style="top:727.04px"><span class="th" style="left:0;top:0;transform:translate(38.6px,9.89px);width:37px;height:24.8px;overflow:hidden"><svg style="left:-2px;top:-2px;filter:blur(0.450px)" width="41" height="28.8" viewBox="-2 -2 41 28.8"><rect x="-2" y="-2" width="41" height="28.8" fill="#e3a81c"/><rect x="-2" y="-2" width="41" height="12" fill="#b6cbdf"/><rect x="-2" y="6" width="41" height="4.5" fill="#c9d7e2"/><ellipse cx="4" cy="15" rx="3" ry="2.5" fill="#c88a14"/><ellipse cx="13" cy="20" rx="3.5" ry="2.5" fill="#f0bc28"/><ellipse cx="24" cy="19" rx="3" ry="2.5" fill="#c48612"/><ellipse cx="34" cy="14" rx="3" ry="2.5" fill="#f0b824"/><ellipse cx="20" cy="23" rx="4" ry="2" fill="#b87c10"/><ellipse cx="8" cy="23" rx="3" ry="2" fill="#eeb422"/><ellipse cx="31" cy="22" rx="3" ry="2" fill="#d89a18"/><ellipse cx="8" cy="11" rx="2.6" ry="3.2" fill="#3c2818"/><ellipse cx="8" cy="16" rx="2.4" ry="3.5" fill="#e9cab8"/><ellipse cx="18.5" cy="11.5" rx="2.6" ry="3.4" fill="#4a2c18"/><ellipse cx="18.5" cy="17" rx="2.2" ry="3.5" fill="#7a4a28"/><ellipse cx="29" cy="11" rx="2.6" ry="3.2" fill="#6a4a30"/><ellipse cx="29" cy="16" rx="2.4" ry="3.5" fill="#edd2c4"/></svg></span><span class="n1">antonino-visalli-RNiBLy7aHck-unsplash.jpg</span><span class="n2">/Asset-Data/Demo/Images/1-apollon-Demo-Images/anto…</span><span class="ty">Bild</span><span class="sz">1.84 MB</span></div>
<div class="row" style="top:771.12px"><span class="th" style="left:0;top:0;transform:translate(38.6px,3.99px);width:27.3px;height:36.6px;overflow:hidden"><svg style="left:-2px;top:-2px;filter:blur(0.450px)" width="31.3" height="40.6" viewBox="-2 -2 31.3 40.6"><rect x="-2" y="-2" width="31.3" height="40.6" fill="#d69a5c"/><path d="M-2 3h32M-2 6.500h32M-2 10h32M-2 13.500h32M-2 17h32M-2 28h32M-2 31.500h32" fill="none" stroke="#c58a4c" stroke-width="0.800"/><rect x="-2" y="7" width="6" height="28" fill="#5c5048"/><rect x="-2" y="7" width="7" height="2.5" fill="#7a6a58"/><rect x="20.5" y="0" width="1.6" height="4" fill="#3c3028"/><rect x="13" y="17.5" width="13.5" height="9" fill="#eef2f2"/><rect x="14.5" y="19" width="10.5" height="6" fill="#a8c4d0"/><path d="M17 19v6M20 19v6M23 19v6" fill="none" stroke="#e8f0f0" stroke-width="0.900"/><path d="M4 22H14V21.300" fill="none" stroke="#e8e4dc" stroke-width="0.900"/><path d="M3 27L10 23 18 27V36H3Z" fill="#8c8a84"/><ellipse cx="9" cy="31" rx="3.5" ry="3" fill="#b8bcc0"/><rect x="-2" y="35" width="32" height="3" fill="#6c6860"/></svg></span><span class="n1">antonio-secerovic-NOFdK1xOqkQ-unsplash.jpg</span><span class="n2">/Asset-Data/Demo/Images/1-apollon-Demo-Images/anto…</span><span class="ty">Bild</span><span class="sz">2.66 MB</span></div>
<div class="row" style="top:815.20px"><span class="th" style="left:0;top:0;transform:translate(38.6px,9.89px);width:37px;height:24.8px;overflow:hidden"><svg style="left:-2px;top:-2px;filter:blur(0.450px)" width="41" height="28.8" viewBox="-2 -2 41 28.8"><rect x="-2" y="-2" width="41" height="28.8" fill="#c7e1cd"/><rect x="1" y="-2" width="2.5" height="29" fill="#5c8c70"/><rect x="8" y="-2" width="2" height="29" fill="#6c9c80"/><rect x="19.5" y="-2" width="2.5" height="29" fill="#5c8c70"/><rect x="32" y="-2" width="3" height="29" fill="#6c9c80"/><rect x="12" y="-2" width="5" height="29" fill="#dcece0"/><rect x="24" y="-2" width="6" height="29" fill="#d4e8d8"/></svg></span><span class="n1">arlington-research-Kz8nHVg_tGI-unsplash.jpg</span><span class="n2">/Asset-Data/Demo/Images/1-apollon-Demo-Images/arli…</span><span class="ty">Bild</span><span class="sz">3.10 MB</span></div>
  </div></div>
  <!-- vertical scrollbar -->
  <div class="abs" style="left:922px;top:153.500px;width:15px;height:676.500px;background:#f1f1f1"></div>
  <div class="abs" style="left:924px;top:170px;width:11px;height:246px;background:#c1c1c1"></div>
  <svg style="left:926px;top:160px" width="7" height="4" viewBox="0 0 7 4"><path d="M0 3.800l3.400-3.600 3.400 3.600z" fill="#a3a3a3"/></svg>
  <svg style="left:926px;top:819.500px" width="7" height="4.500" viewBox="0 0 7 4.500"><path d="M0 0.200l3.500 4.100 3.500-4.100z" fill="#505050"/></svg>
  <!-- horizontal scrollbar -->
  <div class="abs" style="left:290px;top:830px;width:632px;height:16px;background:#f1f1f1"></div><div class="abs" style="left:922px;top:830px;width:15px;height:16px;background:#dcdcdc"></div>
  <div class="abs" style="left:306px;top:832px;width:179px;height:11.500px;background:#c1c1c1"></div>
  <svg style="left:295px;top:834px" width="4" height="7" viewBox="0 0 4 7"><path d="M3.800 0l-3.600 3.400 3.600 3.400z" fill="#a3a3a3"/></svg>
  <svg style="left:912px;top:834.300px" width="4.500" height="7" viewBox="0 0 4.500 7"><path d="M0.200 0l4.100 3.400-4.100 3.400z" fill="#505050"/></svg>
</div>

<!-- ============ RIGHT PANEL ============ -->
<div id="right">
  <div class="vl" style="left:939px;top:0;height:846px"></div>
  <svg style="left:960px;top:13px" width="7" height="11" viewBox="0 0 7 11"><path d="M6 0.600l-4.800 4.800 4.800 4.800" fill="none" stroke="#333" stroke-width="1.300"/></svg>
  <!-- paperclip -->
  <svg style="left:1010px;top:10px" width="16" height="17" viewBox="0 0 16 17"><g transform="rotate(38 8 8.500)"><path d="M5.300 4.500v8.200a2.700 2.700 0 0 0 5.400 0V2.600a1.850 1.850 0 0 0-3.700 0v9.800a0.950 0.950 0 0 0 1.900 0V4.500" fill="none" stroke="#2b9cd8" stroke-width="1.150" stroke-linecap="round"/></g></svg>
  <div class="t blue" style="left:1032.500px;top:11px">Benutzerdefinierte Felder</div>
  <!-- tag -->
  <svg style="left:1177px;top:12px" width="14" height="14" viewBox="0 0 14 14"><path fill="#3c3c3c" d="M0.300 1.300c0-0.600 0.400-1 1-1h5c0.400 0 0.700 0.100 1 0.400l6 6c0.500 0.500 0.500 1.300 0 1.800l-4.800 4.800c-0.500 0.500-1.300 0.500-1.800 0l-6-6c-0.300-0.300-0.400-0.600-0.400-1z"/><circle cx="3.300" cy="3.300" r="1.200" fill="#fff"/></svg>
  <div class="t" style="left:1198px;top:11px">Keywords &amp; Tagging</div>
  <!-- stamp -->
  <svg style="left:1320px;top:10.500px" width="16" height="16" viewBox="0 0 16 16"><path fill="#3c3c3c" d="M7.700 0.300c1.700 0 3 1.300 3 2.900 0 0.900-0.400 1.600-0.900 2.300-0.500 0.700-0.600 1.300-0.600 2.100v0.500h4.100c1.100 0 1.900 0.800 1.900 1.900v2.300H0.200v-2.300c0-1.100 0.800-1.900 1.900-1.900h4.100v-0.500c0-0.800-0.100-1.400-0.600-2.100-0.500-0.700-0.900-1.400-0.900-2.300 0-1.600 1.300-2.900 3-2.900zM1.600 13.300h12.200v1.300c0 0.400-0.300 0.800-0.800 0.800H2.400c-0.500 0-0.800-0.400-0.800-0.800z"/></svg>
  <div class="t" style="left:1342.500px;top:11px">Lizenzmanage…</div>
  <svg style="left:1449.500px;top:13px" width="7" height="11" viewBox="0 0 7 11"><path d="M1 0.600l4.800 4.800-4.800 4.800" fill="none" stroke="#333" stroke-width="1.300"/></svg>

  <div class="bar" style="left:940px;top:37px;width:537px;height:36px"></div>
  <div class="abs" style="left:1278.700px;top:41.200px;width:88.300px;height:27.800px;border-radius:3.500px;background:#9c9c9c"></div>
  <div class="abs" style="left:1287px;top:47.500px;width:15px;height:15px;border-radius:50%;background:#fff"></div>
  <svg style="left:1291.500px;top:52px" width="6" height="6" viewBox="0 0 6 6"><path d="M0.800 0.800l4.400 4.400M5.200 0.800l-4.400 4.400" stroke="#8c8c8c" stroke-width="1.100"/></svg>
  <div class="t btx" style="left:1309.500px;top:47.500px">Verwerfen</div>
  <div class="abs" style="left:1374px;top:41.200px;width:88px;height:27.800px;border-radius:3.500px;background:#1cb158"></div>
  <svg style="left:1383px;top:49px" width="14" height="12" viewBox="0 0 14 12"><path d="M1 6.300l3.900 3.800 8-8.800" fill="none" stroke="#fff" stroke-width="2.200"/></svg>
  <div class="t btx" style="left:1404.500px;top:47.500px">Speichern</div>

  <div class="t" style="left:1406.500px;top:84.500px">English</div>
  <svg style="left:1450.500px;top:89.500px" width="10" height="6" viewBox="0 0 10 6"><path d="M0.500 0.500l4.300 4.400 4.300-4.400" fill="none" stroke="#333" stroke-width="1.100"/></svg>
  <div class="hl" style="left:940px;top:109px;width:537px"></div>

  <div class="t b" style="left:954.500px;top:118.8px">Inhaltsbezogene Informationen</div>
<svg style="left:1451px;top:122.5px" width="12" height="7" viewBox="0 0 12 7"><path d="M0.600 6.200l5.200-5.300 5.200 5.300" fill="none" stroke="#333" stroke-width="1.400"/></svg>
  <div class="t b" style="left:954.500px;top:149.3px">EAN</div>
<div class="inp" style="top:144.2px"><span class="">1234</span></div>
  <div class="t b" style="left:954.500px;top:186.3px">Artikelnummer</div>
<div class="inp" style="top:181.3px"><span class="">1234</span></div>
  <div class="t b" style="left:954.500px;top:223.6px">Bild-Name SEO</div>
<svg style="left:1047.5px;top:222.5px" width="16" height="15" viewBox="0 0 16 15"><rect x="0.200" y="0.600" width="1.600" height="14" fill="#3c3c3c"/><path fill="#3c3c3c" d="M2.900 1.200c1.800-0.900 3.400-0.900 5.200-0.200s3.400 0.700 5.200-0.200c0.700-0.300 1.500 0.100 1.500 0.900v6.700c0 0.500-0.300 0.900-0.700 1.100-2 0.900-3.800 0.900-5.800 0.200-1.800-0.700-3.400-0.600-5.400 0.300z"/></svg><div class="inp" style="top:218.4px"><span class=""><u class="sq">Feschbook</u></span></div>
  <div class="t b" style="left:954.500px;top:260.3px">Alt-Tag SEO</div>
<svg style="left:1030.5px;top:259.2px" width="16" height="15" viewBox="0 0 16 15"><rect x="0.200" y="0.600" width="1.600" height="14" fill="#3c3c3c"/><path fill="#3c3c3c" d="M2.900 1.200c1.800-0.900 3.400-0.900 5.200-0.200s3.400 0.700 5.200-0.200c0.700-0.300 1.500 0.100 1.500 0.900v6.700c0 0.500-0.300 0.900-0.700 1.100-2 0.900-3.800 0.900-5.800 0.200-1.800-0.700-3.400-0.600-5.400 0.300z"/></svg><div class="inp" style="top:255.5px"><span class=""><u class="sq">Feschbook</u> Deutsch</span></div>
  <div class="t b" style="left:955px;top:297.8px">Sprachen</div>
  <div class="inp sel" style="left:954.500px;width:508px;top:314.400px"></div>
<div class="chip" style="left:962px;top:318.200px;width:89px">DE (default)<i></i><svg style="right:7.700px;top:5.700px" width="6" height="6" viewBox="0 0 6 6"><path d="M1.200 1.200l3.600 3.600M4.800 1.200l-3.600 3.600" stroke="#7a8c98" stroke-width="0.900"/></svg></div><svg style="left:1443.500px;top:323.5px" width="11" height="7" viewBox="0 0 11 7"><path d="M0.600 0.600l4.700 4.800 4.700-4.800" fill="none" stroke="#333" stroke-width="1.300"/></svg>
  <div class="t b" style="left:954.500px;top:355.3px">Ansicht</div>
  <div class="inp sel" style="top:350.800px"></div>
<div class="chip" style="left:1152px;top:354.5px;width:93.5px">Detailansicht<i></i><svg style="right:7.700px;top:5.700px" width="6" height="6" viewBox="0 0 6 6"><path d="M1.200 1.200l3.600 3.600M4.800 1.200l-3.600 3.600" stroke="#7a8c98" stroke-width="0.900"/></svg></div><svg style="left:1443.500px;top:360px" width="11" height="7" viewBox="0 0 11 7"><path d="M0.600 0.600l4.700 4.800 4.700-4.800" fill="none" stroke="#333" stroke-width="1.300"/></svg>
  <div class="t b" style="left:954.500px;top:392.3px">Freigestellt</div>
  <div class="abs" style="left:1144.700px;top:389px;width:14px;height:14px;border:1.200px solid #333;border-radius:2.500px;background:#fff"></div>
  <div class="t b" style="left:954.500px;top:424.0px">Verwendbar für</div>
  <div class="inp sel" style="top:419.500px"></div>
<div class="chip" style="left:1152px;top:423.2px;width:61.8px">Online<i></i><svg style="right:7.700px;top:5.700px" width="6" height="6" viewBox="0 0 6 6"><path d="M1.200 1.200l3.600 3.600M4.800 1.200l-3.600 3.600" stroke="#7a8c98" stroke-width="0.900"/></svg></div><svg style="left:1443.500px;top:428.7px" width="11" height="7" viewBox="0 0 11 7"><path d="M0.600 0.600l4.700 4.800 4.700-4.800" fill="none" stroke="#333" stroke-width="1.300"/></svg>
  <div class="hl" style="left:940px;top:455px;width:537px"></div>

  <div class="t b" style="left:954.500px;top:465.1px">Benutzerdefinierte Felder</div>
<svg style="left:1451px;top:468.7px" width="12" height="7" viewBox="0 0 12 7"><path d="M0.600 6.200l5.200-5.300 5.200 5.300" fill="none" stroke="#333" stroke-width="1.400"/></svg>
  <div class="t b" style="left:954.500px;top:496.0px">Benutzerdefiniertes Feld 1</div>
<svg style="left:1104.5px;top:494.5px" width="16" height="15" viewBox="0 0 16 15"><rect x="0.200" y="0.600" width="1.600" height="14" fill="#3c3c3c"/><path fill="#3c3c3c" d="M2.900 1.200c1.800-0.900 3.400-0.900 5.200-0.200s3.400 0.700 5.200-0.200c0.700-0.300 1.500 0.100 1.500 0.900v6.700c0 0.500-0.300 0.900-0.700 1.100-2 0.900-3.800 0.900-5.800 0.200-1.800-0.700-3.400-0.600-5.400 0.300z"/></svg><div class="inp" style="top:490.2px"><span class="ph">keine Angaben</span></div>
  <div class="t b" style="left:954.500px;top:532.3px">Benutzerdefiniertes Feld 2</div>
<svg style="left:1104.5px;top:530.8px" width="16" height="15" viewBox="0 0 16 15"><rect x="0.200" y="0.600" width="1.600" height="14" fill="#3c3c3c"/><path fill="#3c3c3c" d="M2.900 1.200c1.800-0.900 3.400-0.900 5.200-0.200s3.400 0.700 5.200-0.200c0.700-0.300 1.500 0.100 1.500 0.900v6.700c0 0.500-0.300 0.900-0.700 1.100-2 0.900-3.800 0.900-5.800 0.200-1.800-0.700-3.400-0.600-5.400 0.300z"/></svg><div class="inp" style="top:527.3px"><span class="ph">keine Angaben</span></div>
  <div class="t b" style="left:954.500px;top:568.7px">Benutzerdefiniertes Feld 3</div>
<svg style="left:1104.5px;top:567.3px" width="16" height="15" viewBox="0 0 16 15"><rect x="0.200" y="0.600" width="1.600" height="14" fill="#3c3c3c"/><path fill="#3c3c3c" d="M2.900 1.200c1.800-0.900 3.400-0.900 5.200-0.200s3.400 0.700 5.200-0.200c0.700-0.300 1.500 0.100 1.500 0.900v6.700c0 0.500-0.300 0.900-0.700 1.100-2 0.900-3.800 0.900-5.800 0.200-1.800-0.700-3.400-0.600-5.400 0.300z"/></svg><div class="inp" style="top:564.4px"><span class="ph">keine Angaben</span></div>
  <div class="hl" style="left:940px;top:600px;width:537px"></div>
</div>

<!-- ============ BOTTOM BAR ============ -->
<div id="bc">
<div class="bar" style="left:61px;top:846px;width:1416px;height:37px"></div>
<!-- dam small icon -->
<svg style="left:71px;top:858px" width="16" height="14" viewBox="0 0 16 14">
  <path d="M3.200 0.900h11.600v8.600h-1.600" fill="none" stroke="#333" stroke-width="1.500"/>
  <rect x="0.900" y="3.900" width="10.800" height="8.900" fill="none" stroke="#333" stroke-width="1.600"/>
  <path fill="#333" d="M2 11.800l2.600-2.600 1.300 1 2.300-2.900 2.600 4.500z"/><circle cx="3.600" cy="6.500" r="0.900" fill="#333"/>
  <path d="M13.700 2.600v1M13.700 5.200v1M13.700 7.700v1" stroke="#e8e8e8" stroke-width="1"/>
</svg>
<svg style="left:99.0px;top:859.300px" width="7" height="11" viewBox="0 0 7 11"><path d="M1 0.700l4.700 4.600-4.700 4.600" fill="none" stroke="#333" stroke-width="1.500"/></svg>
<svg style="left:116.500px;top:862.500px" width="14" height="4" viewBox="0 0 14 4"><g fill="#333"><circle cx="2" cy="2" r="1.500"/><circle cx="6.600" cy="2" r="1.500"/><circle cx="11.200" cy="2" r="1.500"/></g></svg>
<svg style="left:141.0px;top:859.300px" width="7" height="11" viewBox="0 0 7 11"><path d="M1 0.700l4.700 4.600-4.700 4.600" fill="none" stroke="#333" stroke-width="1.500"/></svg>
<div class="t" style="left:160px;top:857px">Asset-Data</div>
<svg style="left:226.5px;top:859.300px" width="7" height="11" viewBox="0 0 7 11"><path d="M1 0.700l4.700 4.600-4.700 4.600" fill="none" stroke="#333" stroke-width="1.500"/></svg>
<div class="t" style="left:245.500px;top:857px">Demo</div>
<svg style="left:287.0px;top:859.300px" width="7" height="11" viewBox="0 0 7 11"><path d="M1 0.700l4.700 4.600-4.700 4.600" fill="none" stroke="#333" stroke-width="1.500"/></svg>
<div class="t" style="left:306px;top:857px">Images</div>
<svg style="left:355.0px;top:859.300px" width="7" height="11" viewBox="0 0 7 11"><path d="M1 0.700l4.700 4.600-4.700 4.600" fill="none" stroke="#333" stroke-width="1.500"/></svg>
<div class="t blue" style="left:374px;top:857px">1-apollon-Demo-Images</div>

</div>
</body>
</html>
